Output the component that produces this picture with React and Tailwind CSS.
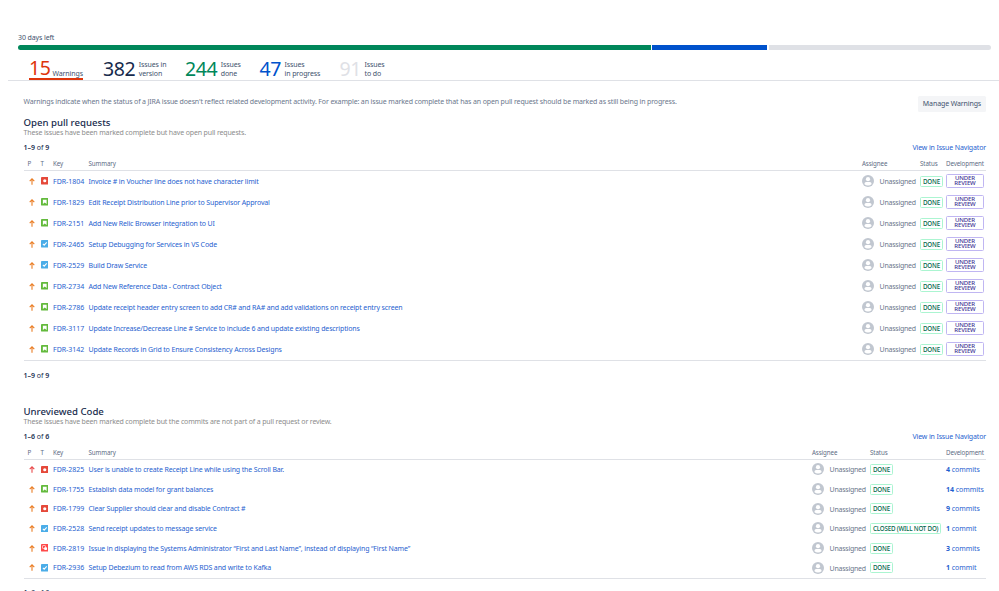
import clsx from 'clsx';

const pullRequests = [
  { key: 'FDR-1804', type: 'bug', summary: 'Invoice # in Voucher line does not have character limit' },
  { key: 'FDR-1829', type: 'story', summary: 'Edit Receipt Distribution Line prior to Supervisor Approval' },
  { key: 'FDR-2151', type: 'story', summary: 'Add New Relic Browser integration to UI' },
  { key: 'FDR-2465', type: 'task', summary: 'Setup Debugging for Services in VS Code' },
  { key: 'FDR-2529', type: 'task', summary: 'Build Draw Service' },
  { key: 'FDR-2734', type: 'story', summary: 'Add New Reference Data - Contract Object' },
  { key: 'FDR-2786', type: 'story', summary: 'Update receipt header entry screen to add CR# and RA# and add validations on receipt entry screen' },
  { key: 'FDR-3117', type: 'story', summary: 'Update Increase/Decrease Line # Service to include 6 and update existing descriptions' },
  { key: 'FDR-3142', type: 'story', summary: 'Update Records in Grid to Ensure Consistency Across Designs' },
];

const unreviewed = [
  { key: 'FDR-2825', type: 'bug', high: true, commits: 4, summary: 'User is unable to create Receipt Line while using the Scroll Bar.' },
  { key: 'FDR-1755', type: 'story', commits: 14, summary: 'Establish data model for grant balances' },
  { key: 'FDR-1799', type: 'bug', commits: 9, summary: 'Clear Supplier should clear and disable Contract #' },
  { key: 'FDR-2528', type: 'task', commits: 1, status: 'CLOSED (WILL NOT DO)', summary: 'Send receipt updates to message service' },
  { key: 'FDR-2819', type: 'subbug', commits: 3, summary: 'Issue in displaying the Systems Administrator “First and Last Name”, instead of displaying “First Name”' },
  { key: 'FDR-2936', type: 'task', commits: 1, summary: 'Setup Debezium to read from AWS RDS and write to Kafka' },
];

const stats = [
  { value: 382, lines: ['Issues in', 'version'], color: 'text-[#172b4d]', width: 'w-[82px]' },
  { value: 244, lines: ['Issues', 'done'], color: 'text-[#00875a]', width: 'w-[74.5px]' },
  { value: 47, lines: ['Issues', 'in progress'], color: 'text-[#0052cc]', width: 'w-[80px]' },
  { value: 91, lines: ['Issues', 'to do'], color: 'text-[#dfe1e6]', width: 'w-[60px]' },
];

function Priority({ high }) {
  return (
    <svg viewBox="0 0 8 8" className={clsx('size-2 shrink-0', high ? 'text-[#e9494a]' : 'text-[#ea7d24]')}>
      <path d="M4 6.8V1M1.7 3.2L4 .9l2.3 2.3" fill="none" stroke="currentColor" strokeWidth="1.1" />
    </svg>
  );
}

const typeColors = { bug: '#e5493a', subbug: '#ff4a4a', story: '#63ba3c', task: '#4bade8' };

function IssueType({ type }) {
  return (
    <svg viewBox="0 0 8 8" className="mb-px size-[7.5px] shrink-0">
      <rect width="8" height="8" rx="0.9" fill={typeColors[type]} />
      {type === 'bug' && <circle cx="4" cy="4" r="1.7" fill="#fff" />}
      {type === 'story' && <path d="M2 1.9h4v4.4L4 4.9 2 6.3z" fill="#fff" />}
      {type === 'task' && <path d="M2 4.1l1.4 1.4L6.1 2.6" fill="none" stroke="#fff" strokeWidth="1.1" />}
      {type === 'subbug' && (
        <>
          <rect x="1.6" y="1.6" width="3.2" height="3.2" rx="0.7" fill="none" stroke="#fff" strokeWidth="0.7" />
          <rect x="3.4" y="3.4" width="3" height="3" rx="0.7" fill="#fff" />
        </>
      )}
    </svg>
  );
}

function Assignee() {
  return (
    <div className="flex items-center">
      <svg viewBox="0 0 12 12" className="mb-px size-3 shrink-0">
        <circle cx="6" cy="6" r="6" fill="#c1c7d0" />
        <circle cx="6" cy="4.2" r="2.1" fill="#fff" />
        <path d="M2.5 9.3V8.5A1.6 1.6 0 0 1 4.1 6.9h3.8a1.6 1.6 0 0 1 1.6 1.6v.8A5 5 0 0 1 6 10.6a5 5 0 0 1-3.5-1.3z" fill="#fff" />
      </svg>
      <span className="ml-[5.5px] pt-px text-[7px] tracking-[-0.24px] text-[#6b778c]">Unassigned</span>
    </div>
  );
}

function Status({ children }) {
  return (
    <span className="mb-px flex h-[11px] items-center rounded-[1.5px] border border-[#abf5d1] px-[2px] pt-px text-[6.2px] font-medium tracking-[-0.18px] text-[#00664a]">
      {children}
    </span>
  );
}

function Range({ n, className }) {
  return (
    <div className={clsx('text-[7px] leading-[10px] text-[#172b4d]', className)}>
      <b className="font-semibold">1–{n}</b> of <b className="font-semibold">{n}</b>
    </div>
  );
}

function Section({ title, note, count, review, rows }) {
  const cols = review
    ? 'grid-cols-[17px_12.5px_35.5px_773.5px_58px_26px_1fr]'
    : 'grid-cols-[17px_12.5px_35.5px_723.5px_58px_76px_1fr]';
  return (
    <section>
      <h2 className="text-[9.6px] leading-3 font-medium text-[#172b4d]">{title}</h2>
      <p className="text-[7px] leading-2 tracking-[-0.15px] text-[#8c8c8c]">{note}</p>
      <div className="mt-[6px] flex justify-between">
        <Range n={count} />
        <a className="text-[7px] leading-[10px] tracking-[-0.14px] text-[#1f5fcf]">View in Issue Navigator</a>
      </div>
      <div className={clsx('grid h-[18px] items-center border-b border-[#dfe1e6] pt-[4px] text-[6.2px] tracking-[-0.1px] text-[#5e6c84]', cols)}>
        <span className="pl-1">P</span>
        <span>T</span>
        <span>Key</span>
        <span>Summary</span>
        <span>Assignee</span>
        <span>Status</span>
        <span>Development</span>
      </div>
      <div className="border-b border-[#dfe1e6]">
        {rows.map((r) => (
          <div key={r.key} className={clsx('grid items-center text-[7px] leading-[10px] text-[#1f5fcf]', cols, review ? 'h-[21px]' : 'h-[19.7px]')}>
            <span className="pl-1"><Priority high={r.high} /></span>
            <IssueType type={r.type} />
            <span>{r.key}</span>
            <span className="tracking-[-0.14px]">{r.summary}</span>
            <Assignee />
            <span className="flex"><Status>{r.status || 'DONE'}</Status></span>
            {review ? (
              <span className="mb-px flex h-[14px] w-[38px] flex-col items-center justify-center rounded-[1.5px] border border-[#c0b6f2] text-[6px] leading-[5px] font-medium tracking-[-0.1px] text-[#403294]">
                <span>UNDER</span>
                <span>REVIEW</span>
              </span>
            ) : (
              <span className="tracking-[-0.04px]">
                <b className="font-bold">{r.commits}</b> {r.commits === 1 ? 'commit' : 'commits'}
              </span>
            )}
          </div>
        ))}
      </div>
    </section>
  );
}

export default function App() {
  return (
    <div className="h-[591px] w-[999px] overflow-hidden bg-white pt-[33px] font-['Noto_Sans',sans-serif] whitespace-nowrap">
      <div className="pl-[18px] text-[7px] leading-[10px] tracking-[-0.1px] text-[#42526e]">30 days left</div>
      <div className="mt-[2px] mr-[8.5px] ml-[18px] flex h-[5px] gap-[1.5px] overflow-hidden rounded-full">
        <div className="w-[632.5px] bg-[#00875a]" />
        <div className="w-[115px] bg-[#0052cc]" />
        <div className="flex-1 bg-[#dfe1e6]" />
      </div>
      <div className="mt-[5px] ml-2 flex h-[26px] items-end border-b border-[#dfe1e6] pl-[21px] text-[7px] leading-[9px] tracking-[-0.1px] text-[#42526e]">
        <div className="mr-[20px] flex h-[24px] w-[54px] items-end justify-between border-b-2 border-b-[#de350b]">
          <span className="text-[19.5px] leading-[20px] tracking-[-0.4px] text-[#de350b]">15</span>
          <span className="leading-[8px]">Warnings</span>
        </div>
        {stats.map((s) => (
          <div key={s.value} className={clsx('flex items-end', s.width)}>
            <span className={clsx('mr-[3.5px] text-[19.5px] leading-[22px] tracking-[-0.4px]', s.color)}>{s.value}</span>
            <span className="pb-[2px]">
              {s.lines[0]}
              <br />
              {s.lines[1]}
            </span>
          </div>
        ))}
      </div>

      <main className="mr-[13px] ml-[23.5px]">
        <div className="flex h-[36px] justify-between pt-[15px] text-[7px] tracking-[-0.14px] text-[#6b778c]">
          <p className="pt-px leading-[10px]">
            Warnings indicate when the status of a JIRA issue doesn't reflect related development activity. For example: an issue marked complete that has an open pull request should be marked as still being in progress.
          </p>
          <button className="h-4 w-[68px] shrink-0 rounded-[1.5px] bg-[#f4f5f7] pt-px tracking-[-0.11px] text-[#42526e]">Manage Warnings</button>
        </div>
        <Section
          title="Open pull requests"
          note="These issues have been marked complete but have open pull requests."
          count={9}
          rows={pullRequests}
          review
        />
        <Range n={9} className="mt-[10px] mb-[25px]" />
        <Section
          title="Unreviewed Code"
          note="These issues have been marked complete but the commits are not part of a pull request or review."
          count={6}
          rows={unreviewed}
        />
        <Range n={6} className="mt-[8.5px]" />
      </main>
    </div>
  );
}
